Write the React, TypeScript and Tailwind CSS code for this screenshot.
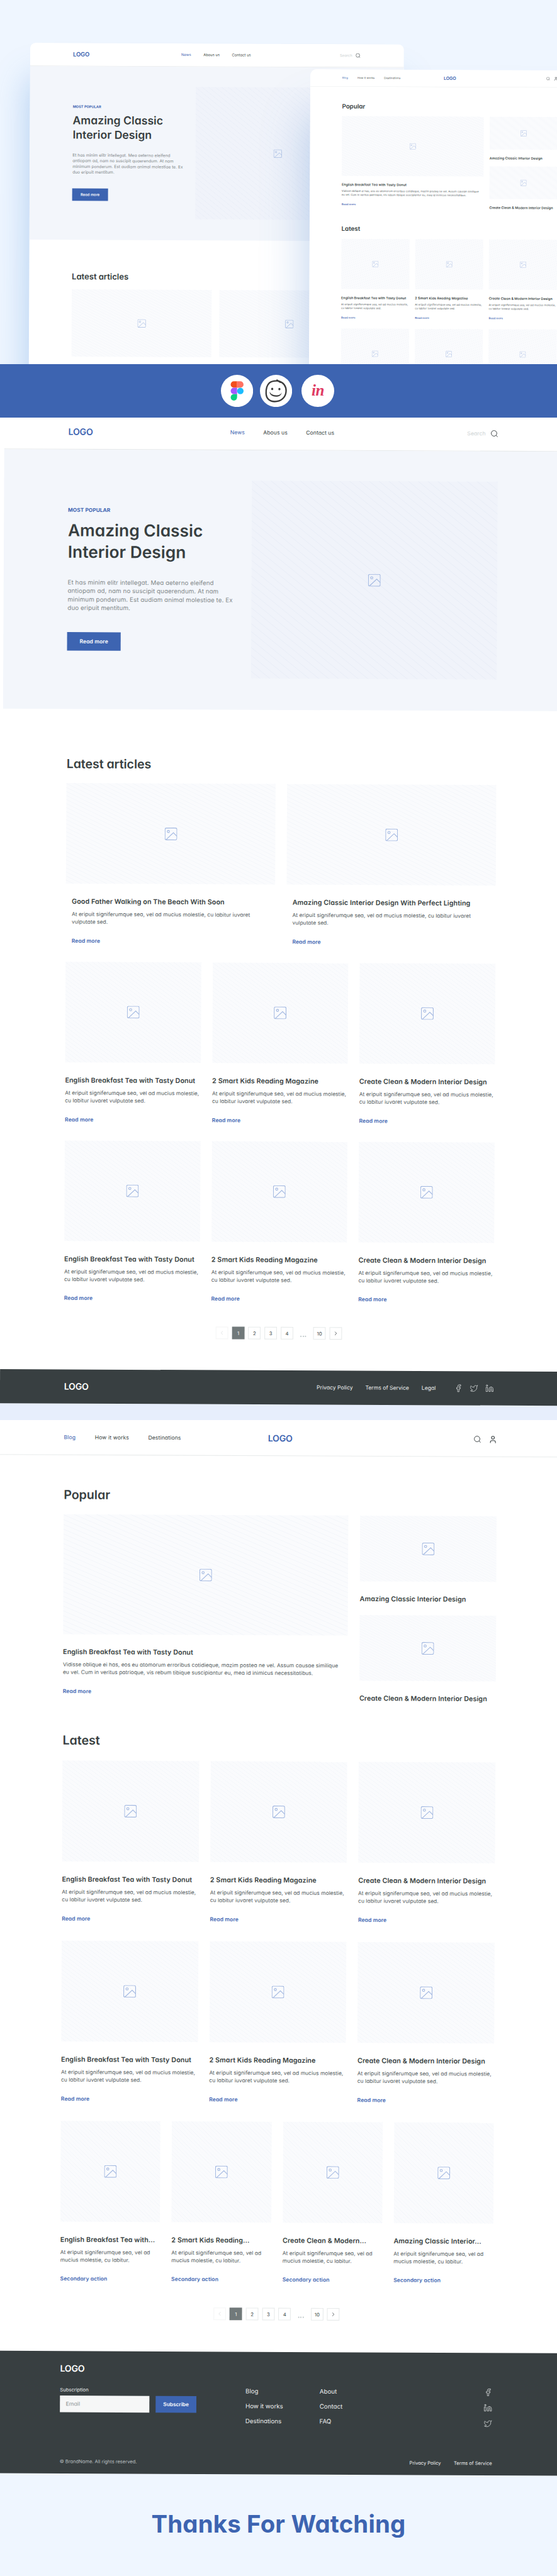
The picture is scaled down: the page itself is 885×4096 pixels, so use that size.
import React from "react";
import { Facebook, Linkedin, Twitter, User } from "lucide-react";

const HATCH_LIGHT =
  "bg-[repeating-linear-gradient(to_top_right,#fafbfd_0,#fafbfd_1.6%,#f1f4f9_1.8%,#fafbfd_2%)]";
const HATCH_HERO =
  "bg-[repeating-linear-gradient(to_top_right,#f0f3fa_0,#f0f3fa_1.7%,#e7ecf6_1.85%,#f0f3fa_2%)]";

function ImageIcon() {
  return (
    <svg viewBox="0 0 36 36" className="size-9 shrink-0" fill="none" stroke="#a2b8e1" strokeWidth="2">
      <rect x="1" y="1" width="34" height="34" rx="4" />
      <circle cx="10.5" cy="11" r="3.2" />
      <path d="M4 34.5 25 14.5l10 10" />
    </svg>
  );
}

function Placeholder({ className, hatch = HATCH_LIGHT }: { className: string; hatch?: string }) {
  return (
    <div className={`flex items-center justify-center ${hatch} ${className}`}>
      <ImageIcon />
    </div>
  );
}

function SearchIcon() {
  return (
    <svg viewBox="0 0 20 20" className="size-5 shrink-0" fill="none" stroke="#383f41" strokeWidth="1.7">
      <circle cx="9" cy="9" r="8" />
      <path d="m14.6 14.6 4.6 4.6" />
    </svg>
  );
}

type Article = { title: string; lines: string[]; action?: string };

const shortLines = ["At eripuit signiferumque sea, vel ad mucius molestie,", "cu labitur iuvaret vulputate sed."];
const wideLines = ["At eripuit signiferumque sea, vel ad mucius molestie, cu labitur iuvaret", "vulputate sed."];
const narrowLines = ["At eripuit signiferumque sea, vel ad", "mucius molestie, cu labitur."];

const featured: Article[] = [
  { title: "Good Father Walking on The Beach With Soon", lines: wideLines },
  { title: "Amazing Classic Interior Design With Perfect Lighting", lines: wideLines },
];
const trio: Article[] = [
  { title: "English Breakfast Tea with Tasty Donut", lines: shortLines },
  { title: "2 Smart Kids Reading Magazine", lines: shortLines },
  { title: "Create Clean & Modern Interior Design", lines: shortLines },
];
const quartet: Article[] = [
  { title: "English Breakfast Tea with...", lines: narrowLines, action: "Secondary action" },
  { title: "2 Smart Kids Reading...", lines: narrowLines, action: "Secondary action" },
  { title: "Create Clean & Modern...", lines: narrowLines, action: "Secondary action" },
  { title: "Amazing Classic Interior...", lines: narrowLines, action: "Secondary action" },
];

function CardTitle({ children, className = "" }: { children: React.ReactNode; className?: string }) {
  return (
    <h3 className={`whitespace-nowrap text-[19.4px] leading-6 font-semibold tracking-[0.15px] text-[#383f41] ${className}`}>
      {children}
    </h3>
  );
}

function CardText({ lines }: { lines: string[] }) {
  return (
    <p className="mt-[14px] whitespace-nowrap text-[15.2px] leading-[22.4px] tracking-[0.1px] text-[#50585a]">
      {lines.map((line) => (
        <span key={line} className="block">
          {line}
        </span>
      ))}
    </p>
  );
}

function CardLink({ children }: { children: React.ReactNode }) {
  return (
    <a className="mt-8 block whitespace-nowrap text-[15.4px] leading-[22px] font-semibold tracking-[0.2px] text-[#3d64b1]">
      {children}
    </a>
  );
}

function ArticleCard({ article, imageClass, inset }: { article: Article; imageClass: string; inset?: boolean }) {
  return (
    <article className="min-w-0">
      <Placeholder className={imageClass} />
      <div className={inset ? "pl-[17px]" : ""}>
        <CardTitle className="mt-[39px]">{article.title}</CardTitle>
        <CardText lines={article.lines} />
        <CardLink>{article.action ?? "Read more"}</CardLink>
      </div>
    </article>
  );
}

function Pagination() {
  const box = "flex size-9 items-center justify-center border-2 border-[#e8ebeb] bg-white";
  return (
    <div className="flex items-center justify-center gap-[10.7px] text-[14px] text-[#383f41]">
      <span className={`${box} opacity-40`}>
        <svg viewBox="0 0 10 14" className="h-3 w-2" fill="none" stroke="#a9afb0" strokeWidth="1.8">
          <path d="M8 1 2 7l6 6" />
        </svg>
      </span>
      <span className="flex size-9 items-center justify-center bg-[#71797a] text-white">1</span>
      <span className={box}>2</span>
      <span className={box}>3</span>
      <span className={box}>4</span>
      <span className="flex size-9 items-end justify-center gap-[2.5px] pb-[7px]">
        <i className="size-1 rounded-full bg-[#c3cbcc]" />
        <i className="size-1 rounded-full bg-[#c3cbcc]" />
        <i className="size-1 rounded-full bg-[#c3cbcc]" />
      </span>
      <span className={box}>10</span>
      <span className={box}>
        <svg viewBox="0 0 10 14" className="h-3 w-2" fill="none" stroke="#383f41" strokeWidth="1.8">
          <path d="m2 1 6 6-6 6" />
        </svg>
      </span>
    </div>
  );
}

function Logo({ className }: { className: string }) {
  return <div className={`text-[25.5px] leading-8 font-semibold tracking-[-0.4px] ${className}`}>LOGO</div>;
}

function NewsPage() {
  return (
    <div className="w-[1605px] bg-white">
      <header className="flex h-[100px] items-center border-b-2 border-[#e6e9ea] pr-[187px] pl-[184px] text-[15.6px] tracking-[0.1px]">
        <Logo className="w-[465px] text-[#3d64b1]" />
        <nav className="flex gap-[53px] text-[#383f41]">
          <a className="text-[#3d64b1]">News</a>
          <a>Abous us</a>
          <a>Contact us</a>
        </nav>
        <div className="ml-auto flex items-center gap-[15px] text-[#ccd2d3]">
          Search
          <SearchIcon />
        </div>
      </header>

      <section className="flex h-[746px] justify-between bg-[#f3f6fb] pt-[87px] pr-[187px] pl-[184px]">
        <div className="w-[500px] pt-[77px]">
          <div className="text-[15px] leading-5 font-bold tracking-[0.1px] text-[#3d64b1]">MOST POPULAR</div>
          <h1 className="mt-[17px] text-[47.5px] leading-[62px] font-semibold tracking-[0.1px] whitespace-nowrap text-[#383f41]">
            Amazing Classic
            <br />
            Interior Design
          </h1>
          <p className="mt-[45px] text-[17.6px] leading-[24.4px] tracking-[0.15px] whitespace-nowrap text-[#7f8688]">
            Et has minim elitr intellegat. Mea aeterno eleifend
            <br />
            antiopam ad, nam no suscipit quaerendum. At nam
            <br />
            minimum ponderum. Est audiam animal molestiae te. Ex
            <br />
            duo eripuit mentitum.
          </p>
          <button className="mt-[57px] -ml-px h-[53px] w-[154px] bg-[#3d64b1] text-[15.4px] font-semibold tracking-[0.2px] text-white">
            Read more
          </button>
        </div>
        <Placeholder className="h-[569px] w-[706px]" hatch={HATCH_HERO} />
      </section>

      <main className="h-[1899px] pr-[187px] pl-[183px]">
        <h2 className="pt-[134px] text-[35.4px] leading-[48px] font-semibold tracking-[-0.1px] text-[#383f41]">
          Latest articles
        </h2>
        <div className="mt-[31px] grid grid-cols-2 gap-[33px]">
          {featured.map((a) => (
            <ArticleCard key={a.title} article={a} imageClass="h-[289px]" inset />
          ))}
        </div>
        <div className="mt-[49px] grid grid-cols-3 gap-x-[33px] gap-y-[49px]">
          {[...trio, ...trio].map((a, i) => (
            <ArticleCard key={i} article={a} imageClass="h-[289px]" />
          ))}
        </div>
        <div className="mt-[69px]">
          <Pagination />
        </div>
      </main>

      <footer className="flex h-[98px] items-center bg-[#383f41] pr-[186px] pl-[184px] text-[15.6px] text-[#eceeee]">
        <Logo className="text-white" />
        <nav className="ml-auto flex gap-[36px]">
          <a>Privacy Policy</a>
          <a>Terms of Service</a>
          <a>Legal</a>
        </nav>
        <div className="ml-[53px] flex gap-[21px]">
          <Facebook size={24} strokeWidth={1.3} />
          <Twitter size={24} strokeWidth={1.3} />
          <Linkedin size={24} strokeWidth={1.3} />
        </div>
      </footer>
    </div>
  );
}

function BlogPage() {
  return (
    <div className="w-[1640px] bg-white">
      <header className="grid h-[100px] w-full grid-cols-[586px_1fr_auto] items-center border-b-2 border-[#e9ecec] pr-[211px] pl-[184px] text-[15.6px] tracking-[0.2px] text-[#383f41]">
        <nav className="flex gap-[55px]">
          <a className="text-[#3d64b1]">Blog</a>
          <a>How it works</a>
          <a>Destinations</a>
        </nav>
        <Logo className="text-[#3d64b1]" />
        <div className="flex items-center gap-[22px]">
          <SearchIcon />
          <User size={25} strokeWidth={1.8} />
        </div>
      </header>

      <main className="h-[2576px] w-[1428px] pl-[184px]">
        <h2 className="pt-[90px] text-[35.6px] leading-[48px] font-semibold tracking-[-0.1px] text-[#383f41]">Popular</h2>
        <div className="mt-[32px] flex h-[617px] justify-between">
          <article className="w-[818px]">
            <Placeholder className="h-[345px]" />
            <CardTitle className="mt-[38px]">English Breakfast Tea with Tasty Donut</CardTitle>
            <CardText
              lines={[
                "Vidisse oblique ei has, eos eu atomorum erroribus cotidieque, mazim postea ne vel. Assum causae similique",
                "eu vel. Cum in veritus patrioque, vis rebum tibique suscipiantur eu, mea id inimicus necessitatibus.",
              ]}
            />
            <CardLink>Read more</CardLink>
          </article>
          <div className="flex w-[392px] flex-col gap-[35px]">
            {["Amazing Classic Interior Design", "Create Clean & Modern Interior Design"].map((title) => (
              <article key={title}>
                <Placeholder className="h-[189px]" />
                <CardTitle className="mt-[38px]">{title}</CardTitle>
              </article>
            ))}
          </div>
        </div>
        <h2 className="mt-[9px] text-[35.6px] leading-[48px] font-semibold tracking-[-0.1px] text-[#383f41]">Latest</h2>
        <div className="mt-[34px] grid grid-cols-3 gap-x-[33px] gap-y-[52px]">
          {[...trio, ...trio].map((a, i) => (
            <ArticleCard key={i} article={a} imageClass="h-[290px]" />
          ))}
        </div>
        <div className="mt-[52px] grid grid-cols-4 gap-x-[33px]">
          {quartet.map((a) => (
            <ArticleCard key={a.title} article={a} imageClass="h-[290px]" />
          ))}
        </div>
        <div className="mt-[70px]">
          <Pagination />
        </div>
      </main>

      <footer className="flex h-[352px] flex-col bg-[#383f41] pt-[34px] pr-[213px] pb-[23px] pl-[185px] text-[#eceeee]">
        <Logo className="text-white" />
        <div className="mt-[35px] flex">
          <div className="w-[533px]">
            <label className="block text-[13.8px] leading-5">Subscription</label>
            <div className="mt-[7px] flex gap-[18px]">
              <div className="flex h-[48px] w-[257px] items-center bg-[#f6f7f7] pl-[17px] text-[15.8px] text-[#8b9293]">
                Email
              </div>
              <button className="h-[48px] w-[117px] bg-[#3d64b1] text-[15px] font-semibold text-white">
                Subscribe
              </button>
            </div>
          </div>
          <nav className="flex w-[213px] flex-col gap-[19px] text-[17.6px] leading-6">
            <a>Blog</a>
            <a>How it works</a>
            <a>Destinations</a>
          </nav>
          <nav className="flex flex-col gap-[19px] text-[17.6px] leading-6">
            <a>About</a>
            <a>Contact</a>
            <a>FAQ</a>
          </nav>
          <div className="ml-auto flex flex-col items-center gap-[21px]">
            <Facebook size={24} strokeWidth={1.3} />
            <Linkedin size={24} strokeWidth={1.3} />
            <Twitter size={24} strokeWidth={1.3} />
          </div>
        </div>
        <div className="mt-auto flex items-center text-[13.6px] leading-6">
          <span className="text-[#b9bfc0]">© BrandName. All rights reserved.</span>
          <a className="ml-auto">Privacy Policy</a>
          <a className="ml-[37px]">Terms of Service</a>
        </div>
      </footer>
    </div>
  );
}

function ToolBand() {
  return (
    <section className="flex h-[84.5px] items-center bg-[#3d64b1] pl-[351.2px]">
      <svg viewBox="105 52 277 277" className="size-[51.2px]">
        <circle cx="243.5" cy="190.5" r="138.5" fill="#fff" />
        <path d="M244 108h-27.5a27.5 27.5 0 0 0 0 55H244z" fill="#f24e1e" />
        <path d="M244 108h28a27.5 27.5 0 0 1 0 55h-28z" fill="#ff7262" />
        <path d="M244 163h-27.5a27.5 27.5 0 0 0 0 55H244z" fill="#a259ff" />
        <circle cx="272" cy="191" r="27.8" fill="#1abcfe" />
        <path d="M244 218.5h-27.5a27.500 27.500 0 1 0 27.500 27.500z" fill="#0acf83" />
      </svg>
      <svg viewBox="441 52 277 277" className="ml-[10.7px] size-[51.2px]" fill="none" stroke="#3c3c3c" strokeLinecap="round">
        <circle cx="579.5" cy="190.5" r="138.5" fill="#fff" stroke="none" />
        <path
          d="M592 104c-32-2-54 3-70 18-21 20-30 55-28 92 2 42 30 68 74 68 54 0 97-36 98-92 1-42-24-72-58-82"
          strokeWidth="12.5"
        />
        <path d="m588 99 28 16" strokeWidth="14" />
        <ellipse cx="546.5" cy="173.5" rx="9" ry="10" fill="#3c3c3c" stroke="none" />
        <ellipse cx="608.5" cy="174.5" rx="9" ry="10" fill="#3c3c3c" stroke="none" />
        <path d="M525 197c4 16 24 30 54 31 28 0 44-10 49-25 0 20-20 38-50 37-34 0-56-22-53-43z" fill="#3c3c3c" stroke="none" />
      </svg>
      <div className="ml-[15.2px] flex size-[51.2px] items-center justify-center rounded-full bg-white pb-[2px] font-['Liberation_Serif',serif] text-[25px] leading-none font-bold tracking-[-0.5px] text-[#df3a63] italic">
        in
      </div>
    </section>
  );
}

export default function App() {
  return (
    <div className="h-[4096px] w-[885px] overflow-hidden bg-[#eff6ff] font-[Inter,sans-serif] [font-feature-settings:'cv11']">
      <section className="relative h-[579px] overflow-hidden bg-[#eff6ff]">
        <div className="absolute top-[68px] left-[47.8px] origin-top-left scale-[0.37] rotate-[0.25deg] overflow-hidden rounded-[24px] shadow-[-10px_150px_140px_rgba(74,140,215,0.34)]">
          <NewsPage />
        </div>
        <div className="absolute top-[110px] left-[492.8px] origin-top-left scale-[0.2755] rotate-[0.25deg] overflow-hidden rounded-[36px] shadow-[-10px_260px_260px_rgba(74,130,205,0.36)]">
          <BlogPage />
        </div>
      </section>

      <ToolBand />

      <section className="flow-root h-[1594.8px] overflow-hidden bg-[linear-gradient(#fff_0,#fff_1540px,#e7eefc_1540px)]">
        <div className="-mt-[4.4px] ml-[7.2px] origin-top-left scale-[0.553] rotate-[0.26deg]">
          <NewsPage />
        </div>
      </section>

      <section className="h-[1684.4px] overflow-hidden bg-[linear-gradient(#fff_0,#fff_1557px,#eff6ff_1557px)]">
        <div className="-mt-[0.5px] origin-top-left scale-[0.553] rotate-[0.26deg]">
          <BlogPage />
        </div>
      </section>

      <section className="flex h-[153.3px] items-center justify-center bg-[#eff6ff] pb-[13px]">
        <p className="text-[38.3px] leading-[48px] font-bold tracking-[0.2px] text-[#3d64b1]">Thanks For Watching</p>
      </section>
    </div>
  );
}
